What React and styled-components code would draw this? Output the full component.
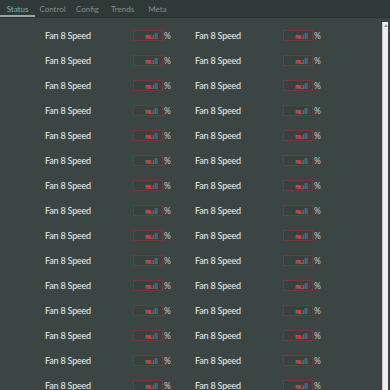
import React from 'react';
import styled, { createGlobalStyle } from 'styled-components';

const GlobalStyle = createGlobalStyle`
    html, body {
        margin: 0;
        padding: 0;
        background: #3b4644;
        font-family: "Lato", "Open Sans", sans-serif;
    }
`;

const Page = styled.div`
    width: 390px;
    height: 390px;
    display: flex;
    flex-direction: column;
    overflow: hidden;
    background: #3b4644;
`;

const TabBar = styled.div`
    height: 17px;
    display: flex;
    align-items: stretch;
    background: #2f3937;
    border-bottom: 1px solid #2a3331;
`;

const Tab = styled.div`
    width: 35px;
    display: flex;
    align-items: center;
    justify-content: center;
    font-size: 8px;
    color: ${props => (props.active ? '#7fb0b8' : '#858d8b')};
    border-bottom: 2px solid ${props => (props.active ? '#9aa6a4' : 'transparent')};
    box-sizing: border-box;
    padding-top: 2px;
`;

const Body = styled.div`
    flex: 1;
    display: flex;
    min-height: 0;
`;

const Rows = styled.div`
    flex: 1;
    padding: 5px 0 0 45px;
    display: grid;
    grid-template-columns: 150px 150px;
    grid-auto-rows: 25px;
    align-content: start;
`;

const Cell = styled.div`
    display: flex;
    align-items: center;
`;

const Label = styled.span`
    width: 88px;
    font-size: 9px;
    letter-spacing: -0.2px;
    color: #ecefee;
`;

const ValueBox = styled.div`
    position: relative;
    width: 30px;
    height: 11px;
    box-sizing: border-box;
    border: 1px solid #7a3537;
    background: #37413f;
    display: flex;
    align-items: center;
    justify-content: flex-end;
    padding-right: 4px;
    font-size: 8px;
    color: #6d8f8f;
    line-height: 1;
`;

const Dot = styled.span`
    position: absolute;
    left: 13px;
    top: 4px;
    width: 4px;
    height: 4px;
    border-radius: 50%;
    background: #ff2a2a;
`;

const Unit = styled.span`
    margin-left: 1px;
    font-size: 8.5px;
    color: #c9cdcc;
`;

const Scrollbar = styled.div`
    width: 5px;
    margin: 4px 2px 0 0;
    background: #eeeeee;
    border-left: 1px solid #c8c8c8;
`;

const Arrow = styled.div`
    width: 0;
    height: 0;
    margin: 2px auto 0;
    border-left: 2px solid transparent;
    border-right: 2px solid transparent;
    border-bottom: 3px solid #9a9a9a;
`;

const tabs = ['Status', 'Control', 'Config', 'Trends', 'Meta'];

const Reading = () => (
    <Cell>
        <Label>Fan 8 Speed</Label>
        <ValueBox>
            null
            <Dot />
        </ValueBox>
        <Unit>%</Unit>
    </Cell>
);

const App = () => {
    const rows = Array.from({ length: 30 });
    return (
        <Page>
            <GlobalStyle />
            <TabBar>
                {tabs.map((t, i) => (
                    <Tab key={t} active={i === 0}>{t}</Tab>
                ))}
            </TabBar>
            <Body>
                <Rows>
                    {rows.map((_, i) => <Reading key={i} />)}
                </Rows>
                <Scrollbar>
                    <Arrow />
                </Scrollbar>
            </Body>
        </Page>
    );
};

export default App;
